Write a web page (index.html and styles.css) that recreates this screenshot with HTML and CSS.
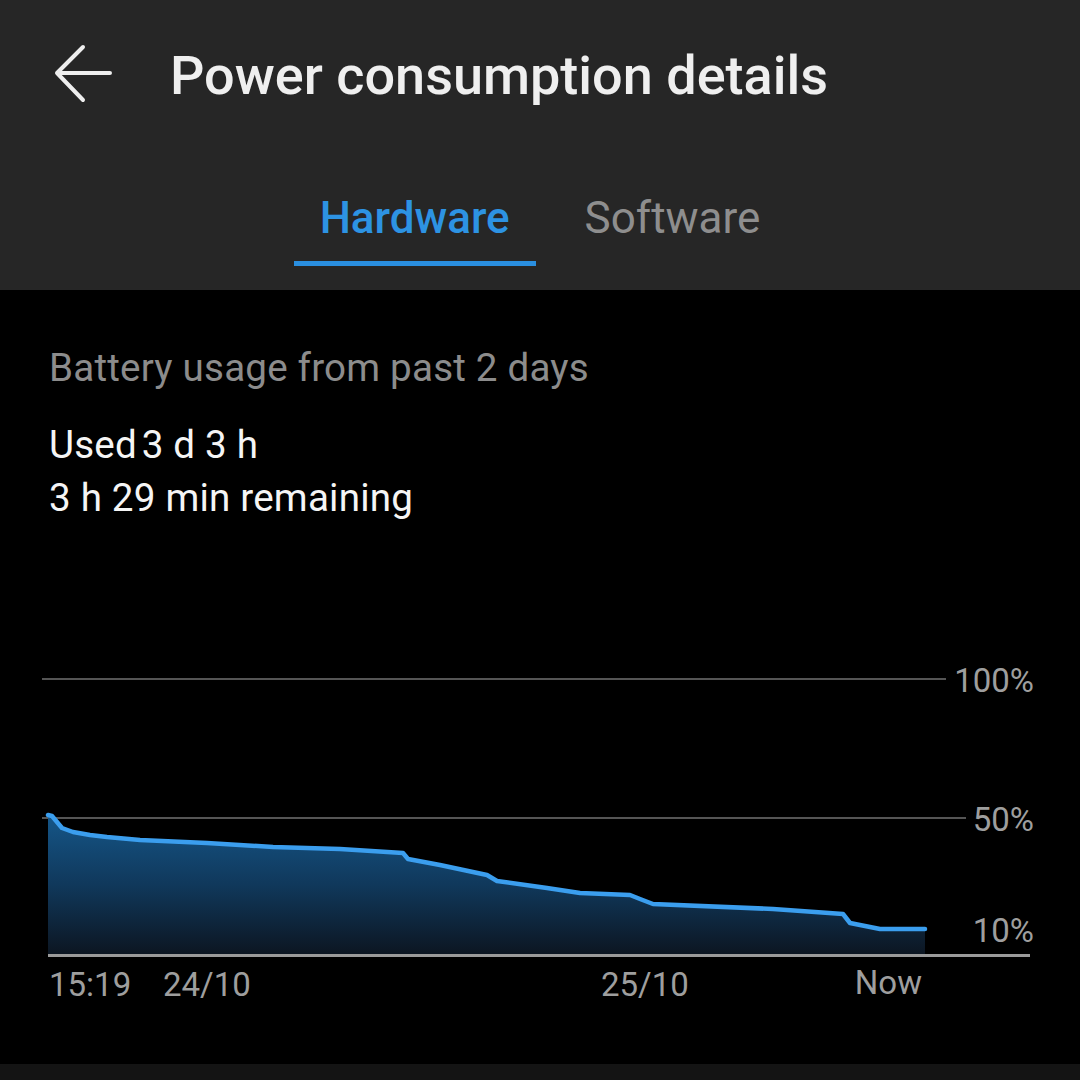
FILE: index.html
```html
<!DOCTYPE html>
<html lang="en">
<head>
<meta charset="utf-8">
<title>Power consumption details</title>
<link rel="stylesheet" href="styles.css">
</head>
<body>
<div class="screen">
  <header class="header">
    <div class="appbar">
      <svg class="back" width="60" height="60" viewBox="0 0 60 60" aria-label="Back">
        <path d="M58 29H5M31 3L5 29L31 56" fill="none" stroke="#eeeeee" stroke-width="4" stroke-linecap="round" stroke-linejoin="round"/>
      </svg>
      <h1 class="title">Power consumption details</h1>
    </div>
    <nav class="tabs">
      <div class="tab active"><span class="tab-label">Hardware</span><span class="tab-bar"></span></div>
      <div class="tab"><span class="tab-label">Software</span><span class="tab-bar"></span></div>
    </nav>
  </header>
  <main class="main">
    <div class="summary">
      <p class="caption">Battery usage from past 2 days</p>
      <p class="stat"><span class="used-label">Used </span>3 d 3 h</p>
      <p class="stat">3 h 29 min remaining</p>
    </div>
    <svg class="chart" width="1080" height="540" viewBox="0 524 1080 540">
      <defs>
        <linearGradient id="fill" x1="0" y1="815" x2="0" y2="955" gradientUnits="userSpaceOnUse">
          <stop offset="0" stop-color="#155688"/>
          <stop offset="0.5" stop-color="#10385b"/>
          <stop offset="1" stop-color="#0c1521"/>
        </linearGradient>
      </defs>
      <line x1="42" y1="679" x2="946" y2="679" stroke="#555555" stroke-width="2"/>
      <line x1="42" y1="818" x2="966" y2="818" stroke="#555555" stroke-width="2"/>
      <polygon fill="url(#fill)" points="48,815 52,816 62,828 73,832 90,835 107,837 140,840 207,843 273,847 340,849 403,853 408,859 440,865 487,875 497,881 547,888 580,893 630,895 640,899 653,904 773,909 843,914 850,923 880,929 925,929 925,955 48,955"/>
      <polyline fill="none" stroke="#3b9eee" stroke-width="4.5" stroke-linejoin="round" stroke-linecap="round" points="48,815 52,816 62,828 73,832 90,835 107,837 140,840 207,843 273,847 340,849 403,853 408,859 440,865 487,875 497,881 547,888 580,893 630,895 640,899 653,904 773,909 843,914 850,923 880,929 925,929"/>
      <line x1="48" y1="955.5" x2="1030" y2="955.5" stroke="#9a9a9a" stroke-width="3"/>
      <text class="axis-label" x="1034" y="692" text-anchor="end">100%</text>
      <text class="axis-label" x="1034" y="831" text-anchor="end">50%</text>
      <text class="axis-label" x="1034" y="942" text-anchor="end">10%</text>
      <text class="axis-label" x="49" y="996">15:19</text>
      <text class="axis-label" x="163" y="996">24/10</text>
      <text class="axis-label" x="601" y="996">25/10</text>
      <text class="axis-label" x="922" y="994" text-anchor="end">Now</text>
    </svg>
  </main>
  <footer class="navbar"></footer>
</div>
</body>
</html>
```

FILE: styles.css
```css
* { box-sizing: border-box; }
html, body {
  margin: 0;
  padding: 0;
  background: #000000;
}
body {
  font-family: Roboto, "Noto Sans", "Liberation Sans", sans-serif;
  width: 1080px;
  height: 1080px;
  overflow: hidden;
}
.screen {
  display: flex;
  flex-direction: column;
  height: 1080px;
}
.header {
  background: #262626;
  height: 290px;
  display: flex;
  flex-direction: column;
}
.appbar {
  height: 150px;
  display: flex;
  align-items: flex-start;
  padding-top: 44px;
  padding-left: 52px;
}
.back {
  display: block;
  flex: none;
}
.title {
  margin: 1px 0 0 58px;
  font-size: 54px;
  line-height: 62px;
  font-weight: 500;
  color: #efefef;
  letter-spacing: 0;
}
.tabs {
  display: flex;
  justify-content: center;
  gap: 23px;
  padding-top: 42px;
}
.tab {
  display: flex;
  flex-direction: column;
  align-items: center;
  padding: 0 26px;
}
.tab-label {
  font-size: 44px;
  line-height: 52px;
  color: #8e8e8e;
  font-weight: 400;
}
.tab.active .tab-label {
  color: #2d93e3;
  font-weight: 500;
}
.tab-bar {
  display: block;
  align-self: stretch;
  height: 5px;
  margin: 17px -26px 0;
  background: transparent;
}
.tab.active .tab-bar {
  background: #2a8fe0;
}
.main {
  flex: 1;
  display: flex;
  flex-direction: column;
}
.summary {
  padding: 56px 0 0 49px;
}
.caption {
  margin: 0 0 28px;
  font-size: 38.6px;
  line-height: 44px;
  color: #8c8c8c;
  letter-spacing: 0.2px;
}
.stat {
  margin: 0;
  font-size: 38.6px;
  line-height: 53px;
  color: #f5f5f5;
  letter-spacing: 0.2px;
}
.used-label {
  word-spacing: -5px;
}
.chart {
  display: block;
  flex: none;
}
.axis-label {
  font-family: Roboto, "Noto Sans", "Liberation Sans", sans-serif;
  font-size: 33px;
  fill: #9e9e9e;
}
.navbar {
  height: 16px;
  background: #141414;
  flex: none;
}
```
